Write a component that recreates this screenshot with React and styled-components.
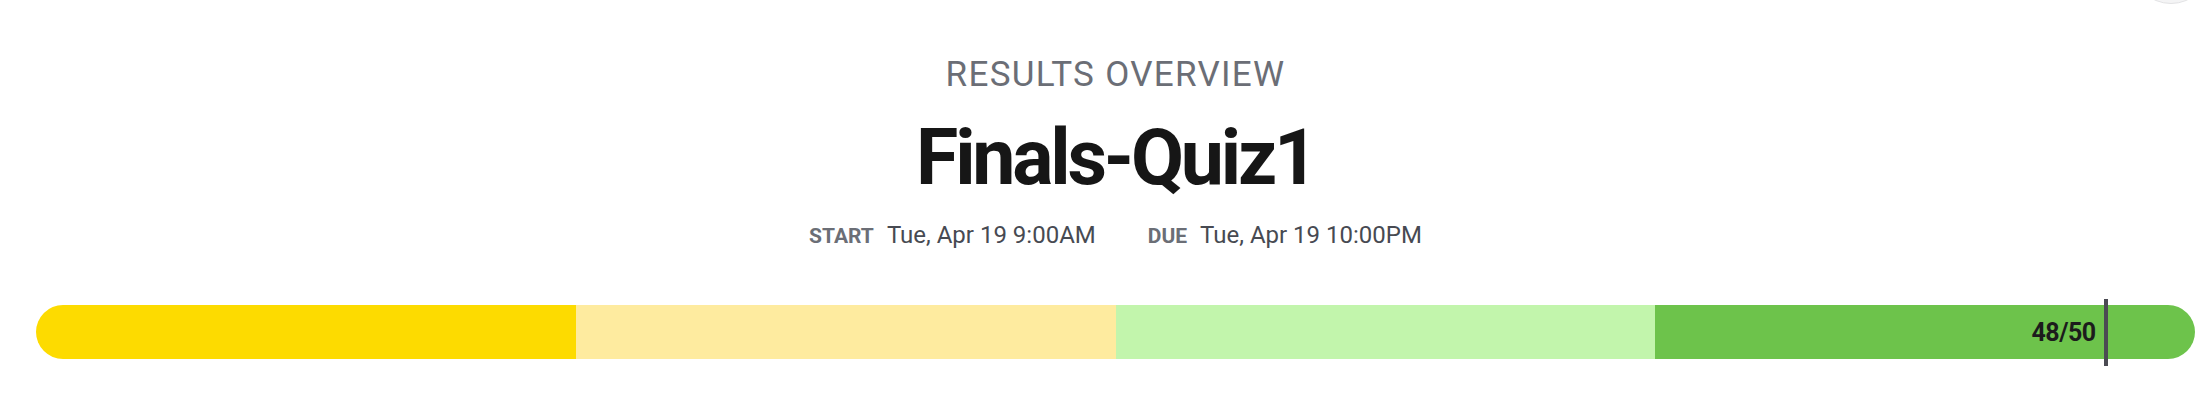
import React from "react";
import styled, { createGlobalStyle } from "styled-components";

const Global = createGlobalStyle`
  html, body { margin: 0; padding: 0; background: #ffffff; }
  body { font-family: Roboto, "Noto Sans", Arial, sans-serif; }
`;

const Page = styled.div`
  position: relative;
  width: 100%;
  height: 420px;
  overflow: hidden;
  box-sizing: border-box;
  padding: 55px 16px 0 36px;
`;

const CornerButton = styled.div`
  position: absolute;
  top: -76px;
  left: 2131px;
  width: 80px;
  height: 80px;
  border-radius: 50%;
  background: #f4f4f5;
  border: 1px solid #e2e2e4;
  box-sizing: border-box;
`;

const Header = styled.header`
  display: flex;
  flex-direction: column;
  align-items: center;
`;

const Eyebrow = styled.div`
  font-size: 35px;
  line-height: 40px;
  font-weight: 400;
  color: #6b6e76;
  text-transform: uppercase;
  letter-spacing: 1.3px;
`;

const Title = styled.h1`
  margin: 15px 0 0;
  font-size: 77px;
  line-height: 96px;
  font-weight: 700;
  color: #161616;
  letter-spacing: -3.2px;
`;

const Meta = styled.div`
  margin-top: 15px;
  display: flex;
  gap: 52px;
  align-items: baseline;
  line-height: 28px;
`;

const MetaItem = styled.div`
  display: flex;
  align-items: baseline;
  gap: 13px;
`;

const MetaLabel = styled.span`
  font-size: 21px;
  font-weight: 700;
  color: #6b6e76;
  text-transform: uppercase;
`;

const MetaValue = styled.span`
  font-size: 24px;
  font-weight: 400;
  color: #474a52;
`;

const BarWrap = styled.div`
  position: relative;
  margin-top: 55px;
`;

const Bar = styled.div`
  display: flex;
  height: 54px;
  border-radius: 27px;
  overflow: hidden;
`;

const Segment = styled.div`
  flex: 1;
  background: ${(p) => p.$color};
`;

const Score = styled.span`
  position: absolute;
  top: 0;
  height: 54px;
  display: flex;
  align-items: center;
  font-size: 25px;
  font-weight: 700;
  color: #1c1c1c;
  letter-spacing: -0.5px;
  transform: translateX(-100%);
`;

const Marker = styled.div`
  position: absolute;
  top: -6px;
  width: 4px;
  height: 67px;
  background: #4b4b53;
  transform: translateX(-50%);
`;

const segments = ["#fddb00", "#feeb9f", "#c2f5ac", "#6dc34b"];

export default function App() {
  const score = 48;
  const total = 50;
  const pct = (score / total) * 100;
  return (
    <>
      <Global />
      <Page>
        <CornerButton />
        <Header>
          <Eyebrow>Results Overview</Eyebrow>
          <Title>Finals-Quiz1</Title>
          <Meta>
            <MetaItem>
              <MetaLabel>Start</MetaLabel>
              <MetaValue>Tue, Apr 19 9:00AM</MetaValue>
            </MetaItem>
            <MetaItem>
              <MetaLabel>Due</MetaLabel>
              <MetaValue>Tue, Apr 19 10:00PM</MetaValue>
            </MetaItem>
          </Meta>
        </Header>
        <BarWrap>
          <Bar>
            {segments.map((c) => (
              <Segment key={c} $color={c} />
            ))}
          </Bar>
          <Score style={{ left: `calc(${pct}% - 13px)` }}>
            {score}/{total}
          </Score>
          <Marker style={{ left: `calc(${pct}% - 3px)` }} />
        </BarWrap>
      </Page>
    </>
  );
}
